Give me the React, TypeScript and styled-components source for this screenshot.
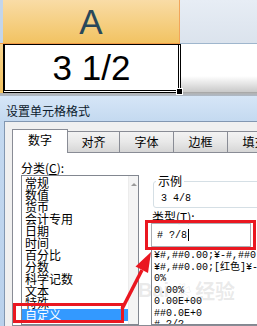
import styled, { createGlobalStyle } from "styled-components";

const CATEGORIES = [
  "常规",
  "数值",
  "货币",
  "会计专用",
  "日期",
  "时间",
  "百分比",
  "分数",
  "科学记数",
  "文本",
  "特殊",
  "自定义",
];

const FORMATS = [
  "¥#,##0.00;¥-#,##0.00",
  "¥#,##0.00;[红色]¥-#,##0.00",
  "0%",
  "0.00%",
  "0.00E+00",
  "##0.0E+0",
  "# ?/?",
  "# ??/??",
];

const TABS = [
  { label: "数字", width: 56 },
  { label: "对齐", width: 52 },
  { label: "字体", width: 54 },
  { label: "边框", width: 54 },
  { label: "填充", width: 54 },
];

const GlobalStyle = createGlobalStyle`
  html, body {
    margin: 0;
    padding: 0;
    background: #fff;
  }
  body {
    font-family: "Noto Sans CJK SC", "Liberation Sans", sans-serif;
  }
`;

const App = () => {
  return (
    <Root>
      <GlobalStyle />
      <HeaderRow>
        <RowStrip $active={false} />
        <ColumnHeader>A</ColumnHeader>
        <HeaderRest />
      </HeaderRow>
      <CellRow>
        <RowStrip $active />
        <Cell>
          3 1/2
          <FillHandle />
        </Cell>
        <CellRest />
      </CellRow>
      <Shadow />

      <TitleBar>设置单元格格式</TitleBar>
      <DialogBody>
        <Frame />
        <Client>
          <TabRow>
            {TABS.map((tab, index) => (
              <Tab key={tab.label} $active={index === 0} $width={tab.width}>
                {tab.label}
              </Tab>
            ))}
          </TabRow>
          <Panel>
            <LeftColumn>
              <Label>分类(<u>C</u>):</Label>
              <ListBox>
                <ListItems>
                  {CATEGORIES.map((item) => (
                    <ListItem key={item} $selected={item === "自定义"}>
                      {item}
                    </ListItem>
                  ))}
                </ListItems>
                <ScrollBar>
                  <ScrollButton>
                    <UpArrow />
                  </ScrollButton>
                </ScrollBar>
              </ListBox>
            </LeftColumn>
            <RightColumn>
              <Sample>
                <legend>示例</legend>
                <SampleValue>3 4/8</SampleValue>
              </Sample>
              <TypeLabel>类型(<u>T</u>):</TypeLabel>
              <TypeInput>
                # ?/8
                <Caret />
              </TypeInput>
              <FormatList>
                {FORMATS.map((item) => (
                  <FormatItem key={item}>{item}</FormatItem>
                ))}
              </FormatList>
            </RightColumn>
          </Panel>
        </Client>
      </DialogBody>

      <Watermark>
        Bai<Paw>❀</Paw>经验
      </Watermark>

      <Annotation viewBox="0 0 257 326" width="257" height="326">
        <rect
          x="14.5"
          y="304.5"
          width="108"
          height="17"
          fill="none"
          stroke="#ea1720"
          strokeWidth="3"
        />
        <rect
          x="146.5"
          y="221.5"
          width="108"
          height="27"
          fill="none"
          stroke="#ea1720"
          strokeWidth="3"
        />
        <line
          x1="122"
          y1="309"
          x2="142"
          y2="270"
          stroke="#ea1720"
          strokeWidth="3.5"
        />
        <polygon points="151,252 148,273 135.5,266.5" fill="#ea1720" />
      </Annotation>
    </Root>
  );
};

export default App;

const Root = styled.div`
  position: relative;
  width: 257px;
  height: 326px;
  overflow: hidden;
  display: flex;
  flex-direction: column;
  background: #fff;
`;

const HeaderRow = styled.div`
  display: flex;
  height: 44px;
  flex-shrink: 0;
`;

const RowStrip = styled.div<{ $active: boolean }>`
  width: 3px;
  flex-shrink: 0;
  background: ${(p) =>
    p.$active ? "linear-gradient(#f8d58f, #f2c25f)" : "#c3d5ea"};
  border-bottom: ${(p) => (p.$active ? "none" : "1px solid #f29b45")};
  box-sizing: border-box;
`;

const ColumnHeader = styled.div`
  width: 177px;
  box-sizing: border-box;
  background: linear-gradient(#f9dca6, #f2c362);
  border-bottom: 1px solid #f29b45;
  border-right: 1px solid #f2a55a;
  font-family: "Liberation Sans", Arial, sans-serif;
  font-size: 35px;
  line-height: 43px;
  text-align: center;
  color: #29485a;
`;

const HeaderRest = styled.div`
  flex: 1;
  background: linear-gradient(#e7edf5, #dbe3ed);
  border-bottom: 1px solid #9fb6cd;
`;

const CellRow = styled.div`
  display: flex;
  height: 49px;
  flex-shrink: 0;
`;

const Cell = styled.div`
  position: relative;
  width: 178px;
  box-sizing: border-box;
  border-top: 1px solid #000;
  border-left: 2px solid #000;
  border-right: 3px double #000;
  border-bottom: 3px double #000;
  background: #fff;
  font-family: "Liberation Sans", Arial, sans-serif;
  font-size: 35px;
  line-height: 45px;
  text-align: center;
  color: #000;
`;

const FillHandle = styled.div`
  position: absolute;
  right: -5px;
  bottom: -5px;
  width: 5px;
  height: 5px;
  background: #000;
  border: 1px solid #fff;
`;

const CellRest = styled.div`
  flex: 1;
  background: linear-gradient(#fff 0, #fff 32px, #c9c9c9 100%);
  border-bottom: 1px solid #a9a9a9;
`;

const Shadow = styled.div`
  height: 3px;
  flex-shrink: 0;
  background: linear-gradient(#b3b3b3, #aeb9c6);
`;

const TitleBar = styled.div`
  height: 25px;
  flex-shrink: 0;
  box-sizing: border-box;
  padding: 3px 0 0 6px;
  display: flex;
  align-items: center;
  background: linear-gradient(#d6e6f7, #c4d9f0);
  font-size: 12px;
  color: #0c1a2c;
`;

const DialogBody = styled.div`
  flex: 1;
  display: flex;
  min-height: 0;
`;

const Frame = styled.div`
  width: 4px;
  flex-shrink: 0;
  background: linear-gradient(#c4d9f0, #b9d1ec);
`;

const Client = styled.div`
  flex: 1;
  display: flex;
  flex-direction: column;
  min-width: 0;
  background: #f0f0f0;
  border-left: 1px solid #8297b1;
  border-top: 1px solid #8297b1;
  padding: 7px 0 0 7px;
`;

const TabRow = styled.div`
  display: flex;
  align-items: flex-end;
  height: 23px;
  flex-shrink: 0;
`;

const Tab = styled.div<{ $active: boolean; $width: number }>`
  position: relative;
  z-index: ${(p) => (p.$active ? 1 : 0)};
  flex-shrink: 0;
  width: ${(p) => p.$width}px;
  height: ${(p) => (p.$active ? 24 : 21)}px;
  margin-bottom: ${(p) => (p.$active ? -1 : 0)}px;
  box-sizing: border-box;
  border: 1px solid #898c95;
  border-bottom: none;
  border-left: ${(p) => (p.$active ? "1px solid #898c95" : "none")};
  background: ${(p) =>
    p.$active ? "#fff" : "linear-gradient(#f3f3f3, #e8e8e8 50%, #d6d6d6)"};
  font-size: 12px;
  line-height: ${(p) => (p.$active ? 20 : 19)}px;
  text-align: center;
  color: #000;
`;

const Panel = styled.div`
  flex: 1;
  display: flex;
  width: 300px;
  background: #fff;
  border: 1px solid #898c95;
  padding: 7px 0 0 8px;
  min-height: 0;
`;

const LeftColumn = styled.div`
  width: 118px;
  flex-shrink: 0;
  display: flex;
  flex-direction: column;
`;

const Label = styled.div`
  height: 15px;
  font-size: 12px;
  line-height: 15px;
  color: #000;

  u {
    text-decoration: underline;
  }
`;

const ListBox = styled.div`
  flex: 1;
  display: flex;
  border: 1px solid #828790;
  box-sizing: border-box;
`;

const ListItems = styled.div`
  flex: 1;
  padding-top: 1px;
`;

const ListItem = styled.div<{ $selected: boolean }>`
  height: 12px;
  padding-left: 3px;
  font-size: 12px;
  line-height: 12px;
  color: ${(p) => (p.$selected ? "#fff" : "#000")};
  background: ${(p) => (p.$selected ? "#3399ff" : "transparent")};
`;

const ScrollBar = styled.div`
  width: 9px;
  background: #f4f4f4;
  border-left: 1px solid #ececec;
`;

const ScrollButton = styled.div`
  height: 17px;
  display: flex;
  align-items: center;
  justify-content: center;
  background: #f4f4f4;
`;

const UpArrow = styled.div`
  width: 0;
  height: 0;
  border-left: 3px solid transparent;
  border-right: 3px solid transparent;
  border-bottom: 3px solid #9a9a9a;
`;

const RightColumn = styled.div`
  width: 140px;
  flex-shrink: 0;
  margin-left: 12px;
  margin-top: 15px;
  display: flex;
  flex-direction: column;
`;

const Sample = styled.fieldset`
  margin: 0 0 0 2px;
  padding: 6px 0 2px 2px;
  border: 1px solid #d5dfe5;
  border-radius: 3px;
  min-width: 0;

  legend {
    padding: 0 2px;
    font-size: 12px;
    line-height: 12px;
    color: #000;
  }
`;

const SampleValue = styled.div`
  margin-left: 5px;
  font-family: "Liberation Mono", "Noto Sans CJK SC", monospace;
  font-size: 10px;
  line-height: 12px;
  color: #000;
`;

const TypeLabel = styled.div`
  margin-top: 3px;
  padding-left: 1px;
  height: 12px;
  font-size: 12px;
  line-height: 12px;
  color: #000;
`;

const TypeInput = styled.div`
  width: 100px;
  height: 24px;
  box-sizing: border-box;
  margin-top: 0;
  border: 1px solid #abadb3;
  padding-left: 5px;
  display: flex;
  align-items: center;
  font-family: "Liberation Mono", "Noto Sans CJK SC", monospace;
  font-size: 10px;
  white-space: pre;
  color: #000;
`;

const Caret = styled.span`
  display: inline-block;
  width: 1px;
  height: 12px;
  margin-left: 1px;
  background: #000;
`;

const FormatList = styled.div`
  flex: 1;
  border: 1px solid #828790;
  border-top: none;
  padding: 3px 0 0 2px;
  overflow: hidden;
`;

const FormatItem = styled.div`
  height: 11.5px;
  font-family: "Liberation Mono", "Noto Sans CJK SC", monospace;
  font-size: 10px;
  line-height: 11.5px;
  white-space: nowrap;
  color: #000;
`;

const Watermark = styled.div`
  position: absolute;
  left: 138px;
  top: 276px;
  display: flex;
  align-items: center;
  font-family: "Liberation Sans", "Noto Sans CJK SC", sans-serif;
  font-size: 20px;
  font-weight: bold;
  color: rgba(160, 160, 160, 0.22);
  pointer-events: none;
  white-space: nowrap;
`;

const Paw = styled.span`
  margin: 0 4px;
  font-size: 18px;
`;

const Annotation = styled.svg`
  position: absolute;
  left: 0;
  top: 0;
  pointer-events: none;
`;
